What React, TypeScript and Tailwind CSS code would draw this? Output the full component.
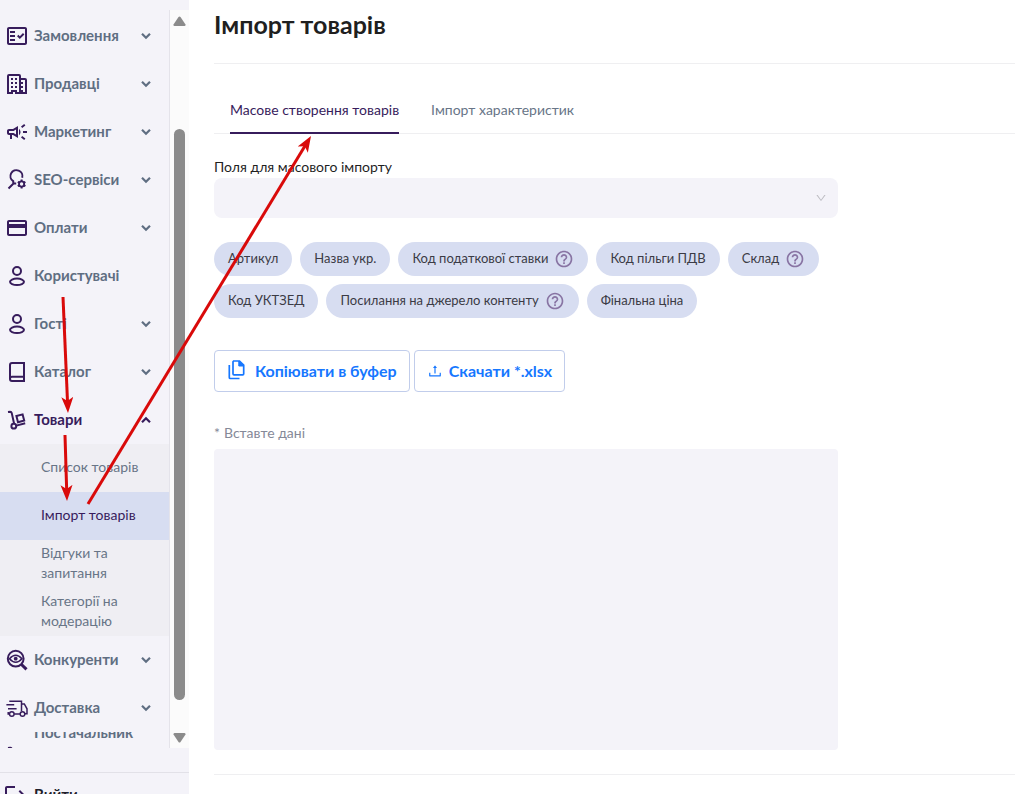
import { useState } from "react";
import clsx from "clsx";
import { AiOutlineDown, AiOutlineUpload } from "react-icons/ai";
import {
  MdHelpOutline,
  MdLogout,
  MdOutlineCampaign,
  MdOutlineCreditCard,
  MdOutlineFactCheck,
} from "react-icons/md";

const svgProps = {
  width: 24,
  height: 24,
  viewBox: "0 0 24 24",
  fill: "none",
  stroke: "currentColor",
  strokeWidth: 2,
  "aria-hidden": true,
};

const BuildingIcon = () => (
  <svg {...svgProps}>
    <path d="M3 21V4q0-1 1-1h10q1 0 1 1v17M15 7h5q1 0 1 1v13M2 21h5v-2h4v2h11" />
    <path
      d="M6 6h2v2H6zM10 6h2v2h-2zM6 10h2v2H6zM10 10h2v2h-2zM6 14h2v2H6zM10 14h2v2h-2zM16 10h2v2h-2zM16 14h2v2h-2zM16 18h2v2h-2z"
      fill="currentColor"
      stroke="none"
    />
  </svg>
);

const SeoIcon = () => (
  <svg {...svgProps}>
    <path d="M3.500 20.500l5-5h2.700M8.400 15.300l-.2-2.100A6 6 0 1 1 17.200 9.800" />
    <circle cx="16.6" cy="16" r="2.6" strokeWidth="1.8" />
    <path
      d="M16.6 11.6v1.8M16.6 18.6v1.8M12.8 13.8l1.6.9M18.8 17.3l1.6.9M12.8 18.2l1.6-.9M18.8 14.7l1.6-.9"
      strokeWidth="2"
    />
  </svg>
);

const UserIcon = () => (
  <svg {...svgProps}>
    <circle cx="12" cy="7" r="4" />
    <ellipse cx="12" cy="17.8" rx="7" ry="3.2" />
  </svg>
);

const BookIcon = () => (
  <svg {...svgProps}>
    <path d="M19 16.8V3H7Q5 3 5 5v14q0 2 2 2h12v-4.2H7q-2 0-2 2" />
  </svg>
);

const TrolleyIcon = () => (
  <svg {...svgProps}>
    <path d="M3 4l2.2-.3q1.2 0 1.5 1.2l2.3 10.4M11.3 17.6l8.9-2.3" />
    <circle cx="8.8" cy="18.2" r="2.4" />
    <path d="M11.4 8l6.2-1.6 1.6 6.1-6.2 1.7z" />
  </svg>
);

const WatchIcon = () => (
  <svg {...svgProps}>
    <circle cx="10.7" cy="10.7" r="7.9" />
    <path d="M16.5 16.5l5 4.8" strokeWidth="3" />
    <path d="M4.5 10.7q6.2-7 12.4 0-6.2 7-12.4 0z" strokeWidth="1.6" />
    <circle cx="10.7" cy="10.7" r="1.9" fill="currentColor" stroke="none" />
  </svg>
);

const TruckIcon = () => (
  <svg {...svgProps} strokeWidth={1.5}>
    <path d="M4.3 5.3h12.2v9.9M16.5 8h2.8l2.7 4.8v5h-2M15 18H9.2M4.4 18H3.2v-2M1.4 8.8h7.8M3 12.7h8.6" />
    <circle cx="6.8" cy="18" r="2.3" />
    <circle cx="17.5" cy="18" r="2.3" />
  </svg>
);

const CopyIcon = () => (
  <svg {...svgProps} width={20} height={24} viewBox="0 0 20 24" strokeWidth={1.7}>
    <path d="M6 2h6.500l4.200 4.200v8.600q0 1-1 1H7q-1 0-1-1V3q0-1 1-1" />
    <path d="M11.800 2v5h5z" fill="currentColor" strokeWidth="1" />
    <path d="M2.300 6v12.500q0 1 1 1h9.200" />
  </svg>
);

const Chevron = ({ open }: { open?: boolean }) => (
  <svg
    width="10"
    height="8"
    viewBox="0 0 10 8"
    fill="none"
    stroke="currentColor"
    strokeWidth="2.2"
    aria-hidden
  >
    <path d={open ? "M1 6.2l4-4 4 4" : "M1 1.8l4 4 4-4"} />
  </svg>
);

type MenuItem = {
  label: string;
  icon: React.ReactNode;
  plain?: boolean;
  children?: string[];
};

const menu: MenuItem[] = [
  { label: "Замовлення", icon: <MdOutlineFactCheck size={24} /> },
  { label: "Продавці", icon: <BuildingIcon /> },
  { label: "Маркетинг", icon: <MdOutlineCampaign size={24} /> },
  { label: "SEO-сервіси", icon: <SeoIcon /> },
  { label: "Оплати", icon: <MdOutlineCreditCard size={24} /> },
  { label: "Користувачі", icon: <UserIcon />, plain: true },
  { label: "Гості", icon: <UserIcon /> },
  { label: "Каталог", icon: <BookIcon /> },
  {
    label: "Товари",
    icon: <TrolleyIcon />,
    children: [
      "Список товарів",
      "Імпорт товарів",
      "Відгуки та запитання",
      "Категорії на модерацію",
    ],
  },
  { label: "Конкуренти", icon: <WatchIcon /> },
  { label: "Доставка", icon: <TruckIcon /> },
];

const fields = [
  { label: "Артикул" },
  { label: "Назва укр." },
  { label: "Код податкової ставки", help: true },
  { label: "Код пільги ПДВ" },
  { label: "Склад", help: true },
  { label: "Код УКТЗЕД" },
  { label: "Посилання на джерело контенту", help: true },
  { label: "Фінальна ціна" },
];

const tabs = ["Масове створення товарів", "Імпорт характеристик"];

const Sidebar = () => {
  const [opened, setOpened] = useState("Товари");

  return (
    <aside className="w-[189px] shrink-0 h-full flex flex-col bg-[#f4f3f9] pt-[10px]">
      <div className="flex-1 min-h-0 flex">
        <nav className="flex-1 overflow-hidden border-r border-[#e4e3ea] pt-[2px]">
          <ul>
            {menu.map((item) => (
              <li key={item.label}>
                <button
                  className={clsx(
                    "w-full h-12 flex items-center gap-[5px] pl-[5px] pr-[18px] text-[15px] font-bold",
                    item.children ? "text-[#371c5c]" : "text-[#5f6e82]"
                  )}
                  onClick={() =>
                    setOpened(opened === item.label ? "" : item.label)
                  }
                >
                  <span className="text-[#371c5c]">{item.icon}</span>
                  <span className="flex-1 pb-0.5 text-left">{item.label}</span>
                  {!item.plain && <Chevron open={opened === item.label} />}
                </button>
                {item.children && opened === item.label && (
                  <ul className="bg-[#efeef3]">
                    {item.children.map((child) => (
                      <li key={child}>
                        <a
                          href="#"
                          className={clsx(
                            "h-12 flex items-center pl-[41px] pr-6 pb-0.5 text-[14px] leading-5",
                            child === "Імпорт товарів"
                              ? "bg-[#d7ddf1] text-[#371c5c]"
                              : "text-[#687587]"
                          )}
                        >
                          {child}
                        </a>
                      </li>
                    ))}
                  </ul>
                )}
              </li>
            ))}
            <li>
              <button className="w-full h-12 overflow-hidden flex items-center gap-[5px] pl-[5px] text-[15px] font-bold text-[#5f6e82]">
                <span className="text-[#371c5c]">
                  <TrolleyIcon />
                </span>
                <span className="pb-12 leading-6">Постачальник</span>
              </button>
            </li>
          </ul>
        </nav>
        <div className="w-[19px] flex flex-col items-center bg-[#fbfbfb] pt-[6px] pb-[5px] text-[#8b8b8b]">
          <svg width="13" height="10" viewBox="0 0 13 10" fill="currentColor">
            <path d="M5.5 1q1-1 2 0l5 7.5q.3 1.5-1 1.5h-10q-1.300 0-1-1.500z" />
          </svg>
          <div className="w-[11px] flex-1 mt-[103px] mb-[33px] rounded-full bg-[#8b8b8b]" />
          <svg width="13" height="10" viewBox="0 0 13 10" fill="currentColor">
            <path d="M5.500 9q1 1 2 0l5-7.500q.3-1.500-1-1.500h-10q-1.300 0-1 1.500z" />
          </svg>
        </div>
      </div>
      <div className="h-[46px] shrink-0 overflow-hidden pt-6">
        <button className="w-full h-11 flex items-center gap-[7px] pl-[3px] border-t border-[#e2e1e8] text-[15px] font-bold text-[#20202a]">
          <MdLogout size={24} className="text-[#371c5c]" />
          Вийти
        </button>
      </div>
    </aside>
  );
};

const ImportForm = () => {
  const [data, setData] = useState("");

  return (
    <div className="max-w-[624px] pt-[23px]">
      <label
        htmlFor="fields"
        className="block pb-px text-[14px] leading-5 text-[#1f1f1f]"
      >
        Поля для масового імпорту
      </label>
      <div className="relative">
        <select
          id="fields"
          className="block w-full h-10 appearance-none rounded-lg bg-[#f4f3f9] px-3 text-[14px] focus:outline-none"
        >
          <option></option>
        </select>
        <AiOutlineDown
          size={12}
          className="absolute right-[11px] top-[14px] text-[#bcbcc2] pointer-events-none"
        />
      </div>

      <div className="flex flex-wrap gap-2 mt-6">
        {fields.map((field) => (
          <span
            key={field.label}
            className="h-[34px] flex items-center gap-1.5 px-3.5 rounded-full bg-[#d7ddf1] text-[13px] text-[#3b3b45]"
          >
            {field.label}
            {field.help && <MdHelpOutline size={20} className="text-[#8874a3]" />}
          </span>
        ))}
      </div>

      <div className="flex gap-1 mt-8 text-[16px] font-bold text-[#1677ff]">
        <button className="h-[42px] flex items-center gap-2 px-3 rounded border border-[#c1cdeb]">
          <CopyIcon />
          Копіювати в буфер
        </button>
        <button className="h-[42px] flex items-center gap-1.5 px-3 rounded border border-[#c1cdeb]">
          <AiOutlineUpload size={16} />
          Скачати *.xlsx
        </button>
      </div>

      <label
        htmlFor="data"
        className="flex gap-1 mt-[31px] mb-1.5 text-[14px] leading-5 text-[#858998]"
      >
        <span>*</span>
        Вставте дані
      </label>
      <textarea
        id="data"
        value={data}
        onChange={(e) => setData(e.target.value)}
        className="block w-full h-[301px] resize-none rounded-sm bg-[#f4f3f9] px-3 py-1 text-[14px] leading-5 focus:outline-none"
      />
    </div>
  );
};

const arrows = [
  { x1: 63, y1: 297, x2: 68, y2: 413 },
  { x1: 65, y1: 435, x2: 67, y2: 501 },
  { x1: 88, y1: 504, x2: 311, y2: 136 },
];

const Arrows = () => (
  <svg
    className="absolute left-0 top-0 pointer-events-none"
    width="400"
    height="520"
    aria-hidden
  >
    <defs>
      <marker
        id="head"
        markerUnits="userSpaceOnUse"
        markerWidth="18"
        markerHeight="14"
        refX="16"
        refY="6"
        orient="auto"
      >
        <path d="M0 0l16 6-16 6 4-6z" fill="#d90a0a" />
      </marker>
    </defs>
    {arrows.map((a) => {
      // stop the shaft inside the head so the tip stays sharp
      const len = Math.hypot(a.x2 - a.x1, a.y2 - a.y1);
      const k = (len - 10) / len;
      return (
        <g key={a.y1} stroke="#d90a0a">
          <line
            x1={a.x1}
            y1={a.y1}
            x2={a.x1 + (a.x2 - a.x1) * k}
            y2={a.y1 + (a.y2 - a.y1) * k}
            strokeWidth="3"
          />
          <line {...a} stroke="transparent" markerEnd="url(#head)" />
        </g>
      );
    })}
  </svg>
);

const App = () => {
  const [tab, setTab] = useState(tabs[0]);

  return (
    <div className="relative h-screen flex overflow-hidden bg-white font-['Lato','Noto_Sans',sans-serif]">
      <Sidebar />
      <main className="flex-1 min-w-0 pl-[25px] pt-2">
        <h1 className="pb-[23px] text-[25px] leading-8 font-bold text-[#1f1f1f] border-b border-[#efeff1]">
          Імпорт товарів
        </h1>
        <div
          role="tablist"
          className="flex gap-8 mt-6 pl-4 border-b border-[#efeff1]"
        >
          {tabs.map((name) => (
            <button
              key={name}
              role="tab"
              aria-selected={tab === name}
              className={clsx(
                "pt-3 pb-3 -mb-px border-b-2 text-[14px] leading-5",
                tab === name
                  ? "border-[#371c5c] text-[#371c5c]"
                  : "border-transparent text-[#687587]"
              )}
              onClick={() => setTab(name)}
            >
              {name}
            </button>
          ))}
        </div>
        <ImportForm />
        <hr className="mt-6 border-[#efeff1]" />
      </main>
      <Arrows />
    </div>
  );
};

export default App;
